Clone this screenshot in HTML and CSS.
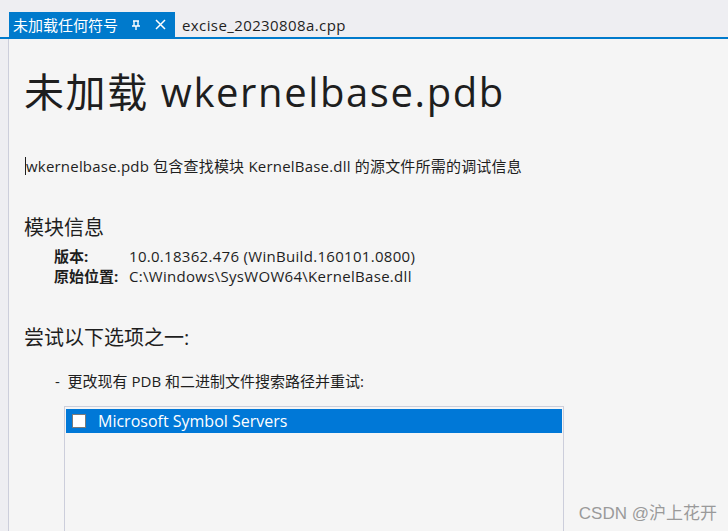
FILE: index.html
```html
<!DOCTYPE html>
<html lang="zh-CN">
<head>
  <meta charset="UTF-8" />
  <title>未加载任何符号</title>
  <link rel="stylesheet" href="styles.css">
</head>
<body>
  <!-- Document tabs -->
  <div class="tabbar">
    <div class="tab active">
      <span class="tab-name">未加载任何符号</span>
      <svg class="pin" width="10" height="10" viewBox="0 0 10 10">
        <path d="M2 1h6M3 1v5M7 1v5M1 6h8M5 6v4" stroke="#fff" stroke-width="1.4" fill="none"/>
      </svg>
      <svg class="close" width="11" height="11" viewBox="0 0 11 11">
        <path d="M1 1l9 9M10 1l-9 9" stroke="#fff" stroke-width="1.5" fill="none"/>
      </svg>
    </div>
    <div class="tab">excise_20230808a.cpp</div>
  </div>

  <!-- Document body -->
  <div class="workspace">
    <div class="gutter"></div>
    <div class="doc">
      <h1>未加载 wkernelbase.pdb</h1>
      <p class="summary"><span class="caret"></span>wkernelbase.pdb 包含查找模块 KernelBase.dll 的源文件所需的调试信息</p>

      <h2>模块信息</h2>
      <div class="info">
        <div class="info-row">
          <strong>版本:</strong>
          <span>10.0.18362.476 (WinBuild.160101.0800)</span>
        </div>
        <div class="info-row">
          <strong>原始位置:</strong>
          <span>C:\Windows\SysWOW64\KernelBase.dll</span>
        </div>
      </div>

      <h2 class="options">尝试以下选项之一:</h2>
      <div class="option">-&nbsp; 更改现有 PDB 和二进制文件搜索路径并重试:</div>

      <div class="listbox">
        <div class="list-item selected">
          <span class="checkbox"></span>
          <span>Microsoft Symbol Servers</span>
        </div>
      </div>
    </div>
  </div>

  <div class="watermark">CSDN @沪上花开</div>
</body>
</html>
```

FILE: styles.css
```css
:root {
  --chrome-bg: #eeeef2;
  --doc-bg: #f5f5f5;
  --accent: #007acc;
  --select: #0078d7;
  --border: #ccceDB;
  --text: #1e1e1e;
  --font: "Open Sans", "Noto Sans CJK SC", sans-serif;
}

html, body {
  height: 100%;
}

body {
  margin: 0;
  background: var(--chrome-bg);
  color: var(--text);
  font-family: var(--font);
  display: flex;
  flex-direction: column;
  overflow: hidden;
}

/* Tabs */
.tabbar {
  flex-shrink: 0;
  display: flex;
  align-items: flex-end;
  height: 37px;
  padding-left: 9px;
  border-bottom: 2px solid var(--accent);
}
.tab {
  height: 25px;
  display: flex;
  align-items: center;
  padding: 0 7px;
  font-size: 15px;
  letter-spacing: 0.4px;
  color: #1e1e1e;
}
.tab.active {
  background: var(--accent);
  color: #fff;
  width: 166px;
  box-sizing: border-box;
  padding: 0 0 0 4px;
  letter-spacing: 0;
}
.tab-name {
  flex: 1;
}
.pin {
  margin-right: 14px;
}
.close {
  margin-right: 9px;
}

/* Document area */
.workspace {
  flex: 1;
  display: flex;
  min-height: 0;
}
.gutter {
  width: 8px;
}
.doc {
  flex: 1;
  background: var(--doc-bg);
  border-left: 1px solid var(--border);
  padding-left: 15px;
  overflow: hidden;
}

h1 {
  margin: 27px 0 0;
  font-size: 40px;
  font-weight: 400;
  line-height: 52px;
  letter-spacing: 1.6px;
}

.summary {
  margin: 38px 0 0 1px;
  font-size: 15px;
  line-height: 20px;
  letter-spacing: 0.2px;
  display: flex;
  align-items: center;
}
.caret {
  width: 1px;
  height: 18px;
  background: #1e1e1e;
}

h2 {
  margin: 38px 0 0;
  font-size: 20px;
  font-weight: 400;
  line-height: 28px;
}

.info {
  margin: 4px 0 0 30px;
}
.info-row {
  display: flex;
  font-size: 15px;
  line-height: 20px;
}
.info-row strong {
  width: 75px;
  letter-spacing: 0;
}
.info-row span {
  letter-spacing: 0.3px;
}

h2.options {
  margin-top: 38px;
}

.option {
  margin: 19px 0 0 31px;
  font-size: 15px;
  line-height: 20px;
}

.listbox {
  margin: 15px 0 0 40px;
  width: 496px;
  height: 140px;
  border: 1px solid var(--border);
  padding: 2px 1px;
}
.list-item {
  height: 24px;
  display: flex;
  align-items: center;
  font-size: 16px;
}
.list-item.selected {
  background: var(--select);
  color: #fff;
}
.checkbox {
  width: 12px;
  height: 12px;
  background: #fff;
  border: 1px solid #7a7a7a;
  margin: 0 12px 0 6px;
}

/* CSDN watermark over the page */
.watermark {
  position: absolute;
  right: 11px;
  bottom: 7px;
  font-size: 17px;
  color: #9a9a9a;
  font-family: "Liberation Sans", "Noto Sans CJK SC", sans-serif;
}
```
